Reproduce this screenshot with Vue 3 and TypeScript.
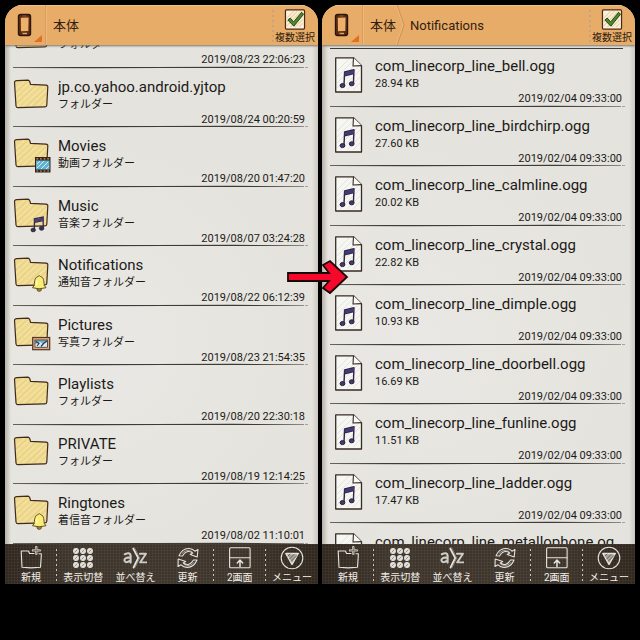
<script setup lang="ts">
type Badge = 'none' | 'film' | 'note' | 'bell' | 'photo'

interface Entry {
  name: string
  detail: string
  date: string
  kind: 'folder' | 'audio'
  badge: Badge
}

interface Pane {
  id: string
  crumbs: string[]
  startsAtTop: boolean
  entries: Entry[]
}

const folder = (name: string, detail: string, date: string, badge: Badge = 'none'): Entry => ({
  name,
  detail,
  date,
  kind: 'folder',
  badge,
})

const audio = (tone: string, detail: string, date = '2019/02/04 09:33:00'): Entry => ({
  name: `com_linecorp_line_${tone}.ogg`,
  detail,
  date,
  kind: 'audio',
  badge: 'none',
})

const panes: Pane[] = [
  {
    id: 'storage',
    crumbs: ['本体'],
    startsAtTop: false,
    entries: [
      folder('', 'フォルダー', '2019/08/23 22:06:23'),
      folder('jp.co.yahoo.android.yjtop', 'フォルダー', '2019/08/24 00:20:59'),
      folder('Movies', '動画フォルダー', '2019/08/20 01:47:20', 'film'),
      folder('Music', '音楽フォルダー', '2019/08/07 03:24:28', 'note'),
      folder('Notifications', '通知音フォルダー', '2019/08/22 06:12:39', 'bell'),
      folder('Pictures', '写真フォルダー', '2019/08/23 21:54:35', 'photo'),
      folder('Playlists', 'フォルダー', '2019/08/20 22:30:18'),
      folder('PRIVATE', 'フォルダー', '2019/08/19 12:14:25'),
      folder('Ringtones', '着信音フォルダー', '2019/08/02 11:10:01', 'bell'),
    ],
  },
  {
    id: 'notifications',
    crumbs: ['本体', 'Notifications'],
    startsAtTop: true,
    entries: [
      audio('bell', '28.94 KB'),
      audio('birdchirp', '27.60 KB'),
      audio('calmline', '20.02 KB'),
      audio('crystal', '22.82 KB'),
      audio('dimple', '10.93 KB'),
      audio('doorbell', '16.69 KB'),
      audio('funline', '11.51 KB'),
      audio('ladder', '17.47 KB'),
      audio('metallophone', '', ''),
    ],
  },
]

const tools = [
  { icon: 'new', label: '新規', divided: true },
  { icon: 'grid', label: '表示切替', divided: false },
  { icon: 'sort', label: '並べ替え', divided: false },
  { icon: 'refresh', label: '更新', divided: true },
  { icon: 'split', label: '2画面', divided: true },
  { icon: 'menu', label: 'メニュー', divided: false },
]

const dots = [5, 12, 19]
</script>

<template>
  <main class="stage">
    <section v-for="pane in panes" :key="pane.id" class="pane">
      <header class="bar">
        <button class="device" type="button" aria-label="端末">
          <svg class="device-icon" viewBox="0 0 16 24">
            <rect x="2.5" y="1.5" width="12" height="21" rx="2" fill="#5a2d14" stroke="#2e150b" stroke-width="1.4" />
            <path d="M4.8 4.8 12.6 4.5 12.3 18 5 18.2Z" fill="#efb06c" />
            <path d="M6.5 20.5H11" stroke="#dfa068" stroke-width="1.3" />
            <path d="M6.5 3H10.5" stroke="#a8683c" stroke-width=".8" />
          </svg>
          <svg class="corner" viewBox="0 0 8 8"><path d="M8 0V7H0Z" fill="#e0701f" /></svg>
        </button>
        <nav class="crumbs">
          <template v-for="(crumb, i) in pane.crumbs" :key="crumb">
            <svg v-if="i > 0" class="chevron" viewBox="0 0 10 40" preserveAspectRatio="none">
              <path d="M1 0 8 20 1 40" fill="none" stroke="#d0965a" stroke-width="1.4" />
              <path d="M0 0 7 20 0 40" fill="none" stroke="#f2bd80" stroke-width=".8" />
            </svg>
            <a class="crumb" :class="{ latin: i > 0 }" href="#">{{ crumb }}</a>
          </template>
        </nav>
        <button class="select-many" type="button">
          <svg class="check" viewBox="0 0 22 22">
            <rect x="1" y="1" width="20" height="20" rx="1" fill="#fbf1dd" stroke="#4b2a17" stroke-width="1.3" />
            <path d="M2 10 10 2M2 14 14 2M2 18 18 2M6 19 19 6M11 19 19 11M15 19 19 15" stroke="#efcfa0" stroke-width="1.2" />
            <path d="M3.5 11.5 6 9.5 9.5 13.5 18 3.5 20 5.5 9.8 18Z" fill="#4b8a2b" stroke="#243f17" stroke-width="1" stroke-linejoin="round" />
          </svg>
          <span class="label">複数選択</span>
        </button>
      </header>

      <div class="viewport" :class="{ top: pane.startsAtTop }">
        <ul class="list">
          <li v-for="entry in pane.entries" :key="entry.date + entry.name" class="row">
            <svg v-if="entry.kind === 'folder'" class="icon" viewBox="0 1 40 40">
              <path d="M1.5 5Q2 3.6 4 3.7L15 3.2Q16.8 3.4 17.5 7.4L33 8.2Q35 8.4 34.8 10L33.8 28Q33.7 30 31.5 29.8L5 30.7Q3.2 30.7 3 29Z" fill="#eed88c" />
              <path d="M3 12 11 5M3 18 16 6M4 23 19 9M5 28 25 9M10 29 31 10M17 29 33 13M24 29 33 20M29 29 33 25" stroke="#f3e3a8" stroke-width="1.3" stroke-linecap="round" stroke-dasharray="6 2 9 1" />
              <path d="M3 15 13 6M4 26 22 9M14 29 33 11M21 28 33 17" stroke="#e4c97a" stroke-width=".6" />
              <path d="M1.5 5Q2 3.6 4 3.7L15 3.2Q16.8 3.4 17.5 7.4L33 8.2Q35 8.4 34.8 10L33.8 28Q33.7 30 31.5 29.8L5 30.7Q3.2 30.7 3 29Z" fill="none" stroke="#40291d" stroke-width="1.2" stroke-linejoin="round" />
              <g v-if="entry.badge === 'film'">
                <rect x="22" y="21" width="15.5" height="15.5" fill="#35231c" />
                <rect x="23" y="24.5" width="13.5" height="9" fill="#63b4d2" />
                <path d="M24 32 31 25M28 33 35 26M24 28 27 25M33 33 36 30" stroke="#d3eef5" stroke-width="1" />
                <path d="M23.5 22.8H37M23.5 35H37" stroke="#d4a778" stroke-width="1.2" stroke-dasharray="1.6 2" />
              </g>
              <g v-else-if="entry.badge === 'note'">
                <path d="M21.4 33.5V22.8L30.2 21V31.5M21.6 26.3 30 24.6" fill="none" stroke="#32284a" stroke-width="1.3" />
                <path d="M21.4 23.2 30.2 21.4V24.4L21.4 26.2Z" fill="#4a3f7a" />
                <ellipse cx="20.2" cy="34" rx="2.2" ry="1.8" fill="#3c3262" stroke="#291d2d" stroke-width=".9" />
                <ellipse cx="28.6" cy="32.4" rx="2.2" ry="1.8" fill="#3c3262" stroke="#291d2d" stroke-width=".9" />
              </g>
              <g v-else-if="entry.badge === 'bell'" stroke="#574019" stroke-width=".9" stroke-linejoin="round">
                <ellipse cx="26.2" cy="34.5" rx="2.2" ry="1.8" fill="#a98d32" />
                <path d="M25 21.5Q26.2 19.6 27.5 21.5C31.5 22.5 30.8 28.5 31.3 30.5L33 32.7Q26 35 19.5 32.7L21.2 30.5C21.7 28 21 22.8 25 21.5Z" fill="#f8ed76" />
                <path d="M23.8 25.5V30" stroke="#fffbd0" stroke-width="1.4" />
              </g>
              <g v-else-if="entry.badge === 'photo'">
                <rect x="19.7" y="22.5" width="17" height="12.2" fill="#dcad7f" stroke="#54372b" stroke-width="1.2" />
                <rect x="22" y="25" width="12.5" height="7.2" fill="#6eb7d4" stroke="#49332c" stroke-width=".8" />
                <path d="M22.5 29 27 27 30 29 34 26.5V31.8H22.5Z" fill="#dceaf0" />
                <path d="M23 26.5 26 28.5 24 31M28 31.5 30.5 28.5 34 26" fill="none" stroke="#2d3849" stroke-width="1.2" />
              </g>
            </svg>
            <svg v-else class="icon" viewBox="0 0 40 40">
              <path d="M5.7.8H23.5L31.5 8.6V35H5.7Z" fill="#f6f6f2" />
              <path d="M7 14 19 2M7 20 23 4M7 26 25 8M7 31 29 9M10 33 30 13M17 33 30 20M23 33 30 26" stroke="#e2e4e0" stroke-width="1" />
              <path d="M5.7.8H23.5L31.5 8.6V35H5.7Z" fill="none" stroke="#382a25" stroke-width="1.3" stroke-linejoin="round" />
              <path d="M23.5.8 23 9 31.5 8.6" fill="#f8f8f4" stroke="#382a25" stroke-width="1.1" stroke-linejoin="round" />
              <path d="M14 28.5 14.6 15 24 12.8 23.4 26.5M14.6 18.7 23.8 16.5" fill="none" stroke="#2d2442" stroke-width="1.4" stroke-linejoin="round" />
              <path d="M14.6 15.2 24 13V16.4L14.6 18.6Z" fill="#453a74" />
              <ellipse cx="12.5" cy="28.6" rx="2.4" ry="2" fill="#453a74" stroke="#282031" stroke-width="1" />
              <ellipse cx="21.7" cy="26.8" rx="2.4" ry="2" fill="#453a74" stroke="#282031" stroke-width="1" />
            </svg>
            <div class="texts">
              <span class="name">{{ entry.name }}</span>
              <span class="detail">{{ entry.detail }}</span>
              <time v-if="entry.date" class="date">{{ entry.date }}</time>
            </div>
            <svg class="rule" viewBox="0 0 296 3" preserveAspectRatio="none">
              <path d="M0 1.2 60 .9 140 1 220 .8 291 1.2V1.8L220 2.1 150 1.9 80 2.3 0 1.9Z" fill="#3f3b35" />
              <path d="M292 1.5H295" stroke="#8b8780" stroke-width=".7" />
            </svg>
          </li>
        </ul>
      </div>

      <footer class="tools">
        <button v-for="tool in tools" :key="tool.icon" class="tool" :class="{ divided: tool.divided }" type="button">
          <svg class="tool-icon" viewBox="0 0 24 24" fill="none" stroke="#e6e4df" stroke-width="1.1" stroke-linejoin="round" stroke-linecap="round">
            <template v-if="tool.icon === 'new'">
              <path d="M15 7.5H10.5L9.5 5H2.2L3 21.3 12 21.9 21.5 21.2 22.3 9.5V7.8H20" />
              <path d="M17.3 1V7.8M14 4.4H20.8" stroke-width="2.4" stroke="#c9c6c0" />
              <path d="M17.3 1.4V7.4M14.4 4.4H20.4" stroke-width=".6" stroke="#5a534a" />
            </template>
            <template v-else-if="tool.icon === 'grid'">
              <template v-for="y in dots" :key="y">
                <g v-for="x in dots" :key="x">
                  <circle :cx="x" :cy="y" r="2.4" fill="#dedcd6" />
                  <path :d="`M${x - 1} ${y + 1}l2-2`" stroke="#77726a" stroke-width=".7" />
                </g>
              </template>
            </template>
            <template v-else-if="tool.icon === 'sort'">
              <path d="M1.8 8.2Q7.2 5.6 7.6 9.6V16.6M7.4 11.4Q1.4 11.4 1.4 14.2 1.8 18 7.4 14.6" stroke-width="2.1" stroke="#cfccc6" />
              <path d="M10.2 2.5 15.2 12 10.5 21.5" stroke-width="1.7" />
              <path d="M11.6 2 16.8 12 12 21.6" stroke-width=".7" stroke="#a8a299" />
              <path d="M16.9 7.8H23L17.2 16.4H23.4" stroke-width="1.9" stroke="#cfccc6" />
            </template>
            <template v-else-if="tool.icon === 'refresh'">
              <path d="M3 9.8Q6.2 2.2 13 2.5 16.4 2.6 19 5.2L22 3.5 21.2 11 14.2 8.5 16.8 7Q10.5 3 6.5 10Z" />
              <path d="M21 14Q17.8 21.6 11 21.4 7.6 21.2 5 18.8L2 20.5 2.2 13 9.8 15.4 7.2 17Q13.5 21 17.5 14Z" />
              <path d="M6 7.5Q10 2.5 16 5.5M18 16.5Q14 21.5 8 18.5" stroke-width=".6" />
            </template>
            <template v-else-if="tool.icon === 'split'">
              <rect x="1.6" y="1.8" width="20.5" height="20" rx="1" />
              <path d="M2 11.8H22" />
              <path d="M12 20.5V14.5M9.3 16.9 12 14 14.7 16.9" stroke-width="1.5" />
            </template>
            <template v-else>
              <circle cx="12" cy="12" r="10.8" />
              <path d="M5.8 7.5H18.3L12 18.3Z" fill="#a9a59d" stroke-width="1.4" />
              <path d="M8 10 10 8M9.5 13 14 8.5M11.5 15 17 9.5" stroke="#514a40" stroke-width=".8" />
            </template>
          </svg>
          <span class="label">{{ tool.label }}</span>
        </button>
      </footer>
    </section>

    <svg class="arrow" viewBox="0 0 64 36">
      <path d="M2 14H43L37 6 44 2 61 18 44 34 37 29 43 22H2Z" fill="#f5082b" stroke="#170508" stroke-width="1.8" />
    </svg>
  </main>
</template>

<style>
body {
  background: #000;
}
</style>

<style scoped>
.stage {
  position: relative;
  box-sizing: border-box;
  height: 100vh;
  padding: 5px 5px 56px;
  display: grid;
  grid-template-columns: 1fr 1fr;
  gap: 4px;
  background: #000;
  color: #1c1a18;
  font-family: Roboto, "Noto Sans CJK JP", sans-serif;
}

.pane {
  min-width: 0;
  min-height: 0;
  display: flex;
  flex-direction: column;
  overflow: hidden;
  border-radius: 18px 18px 0 0;
  background: #e5e4df;
}

button {
  margin: 0;
  padding: 0;
  border: 0;
  background: none;
  color: inherit;
  font: inherit;
}

.bar {
  z-index: 1;
  flex: none;
  display: flex;
  height: 40px;
  background: #e8ac69;
  box-shadow: inset 0 1px #f1c184, 0 1px 2px #77736c;
}

.device {
  width: 41px;
  display: flex;
  align-items: center;
  justify-content: flex-end;
  border-right: 1px solid #d79e60;
  box-shadow: 1px 0 #efb878;
}

.device-icon {
  width: 16px;
  height: 24px;
}

.corner {
  width: 8px;
  height: 8px;
  align-self: flex-end;
  margin: 0 3px 2px 2px;
}

.crumbs {
  flex: 1;
  display: flex;
  align-items: center;
  padding-left: 7px;
}

.crumb {
  padding-top: 2px;
  color: #33200f;
  font-size: 13px;
  line-height: 20px;
  text-decoration: none;
}

.crumb.latin {
  padding-left: 4px;
}

.chevron {
  width: 10px;
  height: 40px;
}

.select-many {
  width: 46px;
  display: flex;
  flex-direction: column;
  align-items: center;
  padding-top: 4px;
  color: #2c1a0c;
  background: repeating-linear-gradient(#c8a27a 0 2px, transparent 2px 5px) 0 5px / 2px 32px no-repeat;
}

.label {
  margin-top: 1px;
  font-size: 10px;
  line-height: 14px;
  white-space: nowrap;
}

.check {
  width: 22px;
  height: 22px;
}

.viewport {
  flex: 1;
  min-height: 0;
  display: flex;
  flex-direction: column;
  justify-content: flex-end;
  overflow: hidden;
  background:
    linear-gradient(90deg, #b5b1a7 0, transparent 6px calc(100% - 6px), #cbc8bf 100%),
    radial-gradient(circle at 30% 60%, #e9e8e4, transparent 60%),
    #e4e3dd;
}

.viewport.top {
  justify-content: flex-start;
}

.list {
  flex: none;
  height: 536px;
  margin: 0 0 -1px;
  padding: 0;
  display: grid;
  grid-auto-rows: 1fr;
  list-style: none;
}

.viewport.top .list {
  margin-top: 3px;
  background: linear-gradient(#3f3b35, #3f3b35) 8px 0 / calc(100% - 20px) 1px no-repeat;
}

.row {
  min-height: 0;
  display: grid;
  grid-template-columns: 40px 1fr;
  grid-template-rows: 1fr 3px;
  column-gap: 5px;
  padding: 0 9px 0 8px;
}

.icon {
  width: 40px;
  height: 40px;
  margin-top: 9px;
}

.texts {
  min-width: 0;
  display: flex;
  flex-direction: column;
  padding-top: 8px;
  padding-right: 4px;
}

.name {
  height: 20px;
  overflow: hidden;
  font-size: 15px;
  line-height: 20px;
  word-break: break-all;
}

.detail {
  height: 14px;
  margin-top: 1px;
  font-size: 11px;
  line-height: 14px;
}

.date {
  height: 12px;
  margin-top: 1px;
  align-self: flex-end;
  font-size: 11px;
  line-height: 14px;
}

.rule {
  grid-column: 1 / -1;
  width: 100%;
  height: 3px;
}

.tools {
  z-index: 1;
  flex: none;
  height: 40px;
  display: grid;
  grid-template-columns: repeat(6, 1fr);
  background:
    repeating-linear-gradient(90deg, rgb(255 240 220 / 4%) 0 1px, transparent 1px 3px),
    repeating-linear-gradient(rgb(255 240 220 / 4%) 0 1px, transparent 1px 3px),
    linear-gradient(90deg, #302820, #3e352c 20%, #3e352c 75%, #30281f);
}

.tool {
  min-width: 0;
  display: flex;
  flex-direction: column;
  align-items: center;
  padding-top: 2px;
  color: #f3f1ec;
}

.tool.divided {
  background: repeating-linear-gradient(#c9c5bd 0 2px, transparent 2px 5px) 100% 5px / 1px 32px no-repeat;
}

.tool-icon {
  width: 24px;
  height: 24px;
}

.arrow {
  position: absolute;
  left: 286px;
  top: 259px;
  z-index: 2;
  width: 64px;
  height: 36px;
}
</style>
